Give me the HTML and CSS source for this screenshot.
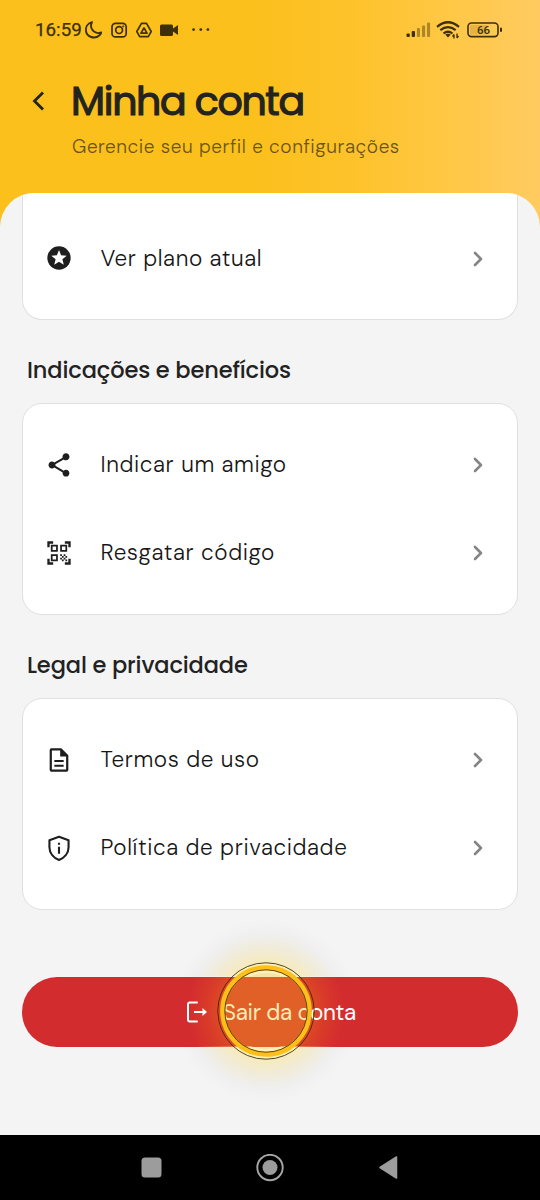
FILE: index.html
```html
<!DOCTYPE html>
<html lang="pt-BR">
<head>
<meta charset="utf-8">
<title>Minha conta</title>
<link rel="stylesheet" href="styles.css">
</head>
<body>
<div class="screen">
  <header class="header">
    <div class="status">
      <span class="clock">16:59</span>
      <svg class="status-left" width="130" height="24" viewBox="0 0 130 24" fill="none" stroke="#3d2f08" stroke-width="1.7">
        <path d="M9 4.2C4.500 5.500 2.200 9.200 3 13.200C4 18.800 11.500 21.700 16.500 17.200C17.500 16.300 18.200 15.200 18.200 14.400C14.800 15.700 11 14.600 9.300 11.800C7.800 9.300 7.700 6.500 9 4.200Z" stroke-linejoin="round" stroke-width="1.900"/>
        <rect x="29" y="5.300" width="14.200" height="13.600" rx="3.500"/>
        <circle cx="36.100" cy="12.100" r="3.400"/><circle cx="40.200" cy="8.300" r=".6" stroke-width="1"/>
        <path d="M58.500 5.300H63.500L68.200 13.500L65.300 18.600H56.700L53.800 13.500Z" stroke-linejoin="round"/>
        <path d="M61 9.900L64 15.200H58Z" stroke-linejoin="round"/>
        <path d="M78.500 6.500H88.500Q90 6.500 90 8V10.500L95 7V17L90 13.500V16.500Q90 18 88.500 18H78.500Q77 18 77 16.500V8Q77 6.500 78.500 6.500Z" fill="#3d2f08" stroke="none"/>
        <g fill="#3d2f08" stroke="none"><circle cx="110.600" cy="11.600" r="1.400"/><circle cx="117.800" cy="11.600" r="1.400"/><circle cx="124.900" cy="11.600" r="1.400"/></g>
      </svg>
      <svg class="status-right" width="98" height="24" viewBox="0 0 98 24" fill="none">
        <g fill="#3d2f08"><rect x="1.500" y="15.500" width="3.300" height="3.500" rx="1"/><rect x="6.700" y="13" width="3.300" height="6" rx="1"/></g>
        <g fill="#3d2f08" opacity=".42"><rect x="11.900" y="10" width="3.100" height="9" rx="1"/><rect x="17" y="7.500" width="3.100" height="11.500" rx="1"/><rect x="22" y="4.500" width="3.100" height="14.500" rx="1"/></g>
        <g stroke="#3d2f08" stroke-width="2.200"><path d="M32 8.800Q43 -.300 54 8.800"/><path d="M35.300 12.200Q43 6 50.700 12.200"/><path d="M38.500 15.500Q43 12 47.500 15.500"/></g>
        <path d="M40.200 16.600Q43 14.800 45.800 16.600L43 19.500Z" fill="#3d2f08"/>
        <path d="M49 16.500V20.500M52 15.500V20M47.500 18.500L49 16.500M52 20L53.500 18" stroke="#3d2f08" stroke-width="1.300"/>
        <rect x="63" y="5" width="30" height="13.600" rx="3.500" stroke="#3d2f08" stroke-width="1.600"/>
        <rect x="65" y="7" width="17" height="9.600" rx="1" fill="#3d2f08" opacity=".14"/>
        <rect x="95" y="9.500" width="2" height="4.500" rx="1" fill="#3d2f08"/>
        <text class="battery" x="78.500" y="16.200" text-anchor="middle">66</text>
      </svg>
    </div>
    <div class="heading">
      <svg class="back" width="16" height="22" viewBox="0 0 16 22" fill="none" stroke="#232320" stroke-width="2.800"><path d="M14 2.500L5.500 11L14 19.500"/></svg>
      <div>
        <h1 class="title">Minha conta</h1>
        <p class="subtitle">Gerencie seu perfil e configurações</p>
      </div>
    </div>
  </header>

  <main class="panel">
    <section class="card card-clipped">
      <div class="row">
        <svg class="icon" viewBox="0 0 24 24"><circle cx="12" cy="12" r="10"/><path fill="#fff" d="M12 5.200L13.800 9.700L18.600 10L14.900 13.100L16.100 17.800L12 15.200L7.900 17.800L9.100 13.100L5.400 10L10.200 9.700Z"/></svg>
        <span class="label">Ver plano atual</span>
        <svg class="chevron" viewBox="0 0 12 18"><path d="M3 3L9 9L3 15"/></svg>
      </div>
    </section>

    <h2 class="section-title">Indicações e benefícios</h2>
    <section class="card">
      <div class="row">
        <svg class="icon" viewBox="0 0 24 24"><path d="M18 16.080c-.76 0-1.440.3-1.960.77L8.910 12.700c.05-.23.090-.46.090-.7s-.04-.47-.09-.7l7.050-4.110c.54.5 1.250.81 2.040.81 1.660 0 3-1.340 3-3s-1.340-3-3-3-3 1.340-3 3c0 .24.040.47.090.7L8.040 9.810C7.500 9.310 6.790 9 6 9c-1.660 0-3 1.340-3 3s1.340 3 3 3c.79 0 1.500-.31 2.040-.81l7.120 4.160c-.05.21-.08.43-.08.65 0 1.610 1.310 2.920 2.920 2.920s2.920-1.310 2.920-2.920-1.310-2.920-2.920-2.920z"/></svg>
        <span class="label">Indicar um amigo</span>
        <svg class="chevron" viewBox="0 0 12 18"><path d="M3 3L9 9L3 15"/></svg>
      </div>
      <div class="row">
        <svg class="icon" viewBox="0 0 24 24"><path d="M9.500 6.500v3h-3v-3h3M11 5H5v6h6V5zm-1.500 9.500v3h-3v-3h3M11 13H5v6h6v-6zm6.500-6.500v3h-3v-3h3M19 5h-6v6h6V5zm-6 8h1.500v1.500H13V13zm1.500 1.500H16V16h-1.500v-1.500zM16 13h1.500v1.500H16V13zm-3 3h1.500v1.500H13V16zm1.500 1.500H16V19h-1.500v-1.500zM16 16h1.500v1.500H16V16zm1.500-1.500H19V16h-1.500v-1.500zm0 3H19V19h-1.500v-1.500zM22 7h-2V4h-3V2h5v5zm0 15v-5h-2v3h-3v2h5zM2 22h5v-2H4v-3H2v5zM2 2v5h2V4h3V2H2z"/></svg>
        <span class="label">Resgatar código</span>
        <svg class="chevron" viewBox="0 0 12 18"><path d="M3 3L9 9L3 15"/></svg>
      </div>
    </section>

    <h2 class="section-title">Legal e privacidade</h2>
    <section class="card">
      <div class="row">
        <svg class="icon" viewBox="0 0 24 24"><path fill-rule="evenodd" d="M5.500 2Q4 2 4 3.500V20.500Q4 22 5.500 22H18.500Q20 22 20 20.500V8L14 2ZM5.900 3.900H13V9H18.100V20.100H5.900ZM8 12V13.800H16V12ZM8 16V17.800H16V16Z"/></svg>
        <span class="label">Termos de uso</span>
        <svg class="chevron" viewBox="0 0 12 18"><path d="M3 3L9 9L3 15"/></svg>
      </div>
      <div class="row">
        <svg class="icon" viewBox="0 0 24 24"><path d="M12 2.300L20.200 5.300V11.300C20.200 16.500 16.500 20.500 12 22.200C7.500 20.500 3.800 16.500 3.800 11.300V5.300Z" fill="none" stroke="#1e1e1e" stroke-width="1.800" stroke-linejoin="round"/><path d="M11.100 7.500h1.800v1.800h-1.800zM11.100 11h1.800v6h-1.800z"/></svg>
        <span class="label">Política de privacidade</span>
        <svg class="chevron" viewBox="0 0 12 18"><path d="M3 3L9 9L3 15"/></svg>
      </div>
    </section>

    <div class="logout">
      <svg class="logout-icon" width="22" height="24" viewBox="0 0 22 24" fill="none" stroke="#fff" stroke-width="2"><path d="M12 2.500H5Q3 2.500 3 4.500V19.500Q3 21.500 5 21.500H12" stroke-linecap="round"/><path d="M9 12H19"/><path d="M17.500 8L22 12L17.500 16Z" fill="#fff" stroke="none"/></svg>
      <span class="logout-label">Sair da conta</span>
      <svg class="touch" width="220" height="220" viewBox="0 0 220 220" fill="none">
        <defs>
          <radialGradient id="shade"><stop offset=".45" stop-color="#777" stop-opacity=".1"/><stop offset=".7" stop-color="#888" stop-opacity=".08"/><stop offset="1" stop-color="#999" stop-opacity="0"/></radialGradient>
          <radialGradient id="halo"><stop offset=".6" stop-color="#ffeaa0" stop-opacity=".66"/><stop offset=".78" stop-color="#ffedaa" stop-opacity=".34"/><stop offset="1" stop-color="#ffeeb8" stop-opacity="0"/></radialGradient>
          <mask id="outside"><rect width="220" height="220" fill="#fff"/><circle cx="110" cy="110" r="47" fill="#000"/></mask>
          <clipPath id="above"><path d="M0 0H220V75.500H0ZM0 145.500H220V220H0Z"/></clipPath>
        </defs>
        <g mask="url(#outside)" clip-path="url(#above)"><circle cx="110" cy="110" r="92" fill="url(#shade)"/><circle cx="110" cy="110" r="78" fill="url(#halo)"/></g>
        <circle cx="110" cy="110" r="42" fill="#fac31b" fill-opacity=".34"/>
        <g clip-path="url(#above)"><circle cx="110" cy="110" r="43" stroke="#fff0b8" stroke-width="10"/></g>
        <circle cx="110" cy="110" r="43.300" stroke="#fdbf18" stroke-width="5"/>
        <circle cx="110" cy="110" r="48.200" stroke="#33290c" stroke-opacity=".85"/>
        <circle cx="110" cy="110" r="41.200" stroke="#44300a" stroke-opacity=".85"/>
      </svg>
    </div>
  </main>

  <nav class="navbar">
    <svg width="28" height="28" viewBox="0 0 28 28"><rect x="4.500" y="3.500" width="20" height="20" rx="3.500" fill="#9c9c9c"/></svg>
    <svg width="28" height="28" viewBox="0 0 28 28"><circle cx="14" cy="13.500" r="12.700" fill="none" stroke="#a6a6a6" stroke-width="1.900"/><circle cx="14" cy="13.500" r="7.500" fill="#9c9c9c"/></svg>
    <svg width="28" height="28" viewBox="0 0 28 28"><path d="M5 13.500L21.500 3V24Z" fill="#9c9c9c" stroke="#9c9c9c" stroke-width="1.500" stroke-linejoin="round"/></svg>
  </nav>
</div>
</body>
</html>
```
FILE: styles.css
```css
* { box-sizing: border-box; }
body { margin: 0; font-family: "DM Sans", Inter, "Open Sans", sans-serif; }
h1, h2, p { margin: 0; }
svg { display: block; flex: none; }

.screen {
  width: 540px;
  height: 1200px;
  overflow: hidden;
  display: flex;
  flex-direction: column;
  background: linear-gradient(90deg, #fbc01b 0%, #fbc01b 46%, #fdc22a 65%, #ffc740 80%, #ffcb60 100%);
}

.header { height: 193px; flex: none; }
.status { display: flex; align-items: center; height: 60px; padding: 0 37px 0 35px; }
.clock { font: 400 18.8px/24px Roboto, sans-serif; color: #3d2f08; width: 48px; -webkit-text-stroke: .25px #3d2f08; }
.status-right { margin-left: auto; }
.battery { font: 500 11.5px Roboto, sans-serif; fill: #3d2f08; }

.heading { display: flex; padding-left: 28px; }
.back { margin: 30px 28px 0 1px; }
.heading > div { padding-top: 18px; }
.title {
  font: 400 39.5px/48px Poppins, Inter, sans-serif;
  letter-spacing: -1.3px;
  color: #232320;
  -webkit-text-stroke: 1.2px #232320;
  margin-left: -2px;
  white-space: nowrap;
}
.subtitle { margin: 9px 0 0 -1px; font-size: 19px; font-weight: 350; line-height: 24px; letter-spacing: .56px; color: #6b5417; white-space: nowrap; }

.panel {
  height: 942px;
  flex: none;
  padding: 0 22px;
  background: #f4f4f4;
  border-radius: 34px 34px 0 0;
  overflow: hidden;
}
.card { height: 212px; padding: 16.500px 23px; background: #fff; border: 1.500px solid #e0e0e0; border-radius: 20px; }
.card-clipped { height: 127px; padding-top: 21px; border-top: 0; border-radius: 0 0 20px 20px; }
.row { display: flex; align-items: center; height: 88px; }
.icon { width: 28px; height: 28px; margin-left: -1px; fill: #1e1e1e; }
.label { margin: 1px 0 0 27.500px; font-size: 22.5px; font-weight: 350; line-height: 30px; letter-spacing: .6px; color: #161616; white-space: nowrap; }
.chevron { width: 12px; height: 18px; margin: 1px 10px 0 auto; fill: none; stroke: #858585; stroke-width: 2.600; stroke-linecap: round; stroke-linejoin: round; }

.section-title {
  height: 83px;
  padding: 33px 0 0 5px;
  font: 500 22.5px/34px Poppins, Inter, sans-serif;
  letter-spacing: -.12px;
  color: #222;
  white-space: nowrap;
}

.logout {
  position: relative;
  display: flex;
  align-items: center;
  height: 70px;
  margin-top: 67px;
  padding-left: 163px;
  border-radius: 35px;
  background: radial-gradient(circle 78px at 244px 34px, #d32c2f 52%, #de4b25 58%, #d93a29 76%, #d32c2f 100%);
  color: #fff;
}
.logout-label { margin-left: 16px; font-size: 22.5px; font-weight: 450; letter-spacing: -.35px; white-space: nowrap; }
.touch { position: absolute; left: 134px; top: -76px; }

.navbar { display: flex; justify-content: center; gap: 91px; padding-top: 19px; height: 65px; background: #000; }
```
